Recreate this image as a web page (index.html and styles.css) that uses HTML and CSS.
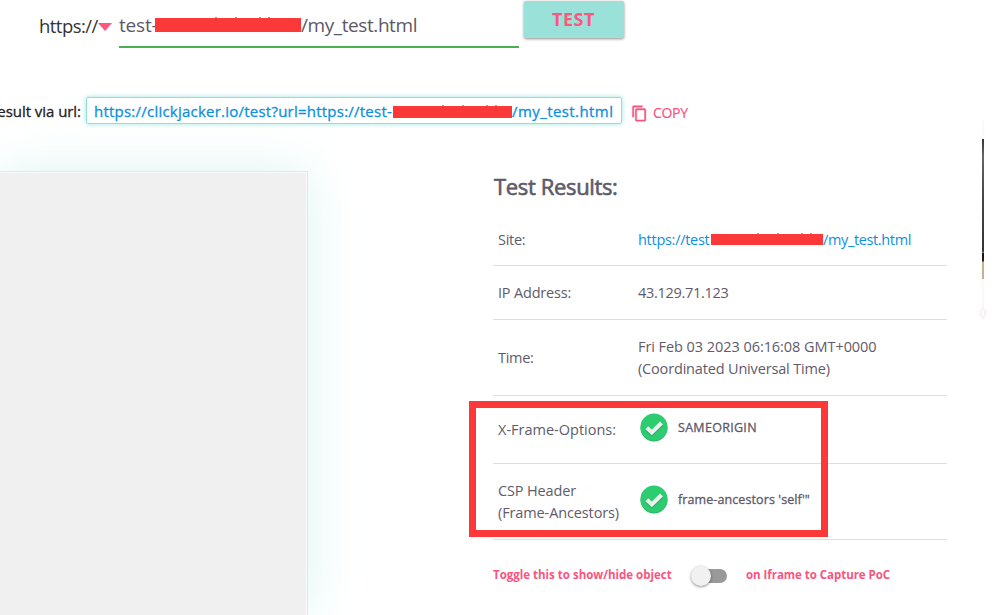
FILE: index.html
```html
<!DOCTYPE html>
<html lang="en">
<head>
<meta charset="utf-8">
<title>Clickjacker test</title>
<link rel="stylesheet" href="styles.css">
</head>
<body>
<div class="page">
  <header class="search">
    <span class="scheme">https://</span>
    <svg class="caret" viewBox="0 0 14 8"><path d="M0 0h14L7 8z"/></svg>
    <div class="field"><span class="t-pre">test-</span><i class="redact r1"></i><span class="t-post">/my_test.html</span></div>
    <button class="test">TEST</button>
  </header>
  <section class="share">
    <div class="share-label">esult via url:</div>
    <div class="share-url"><span class="s-pre">https://clickjacker.io/test?url=https://test-</span><i class="redact r2"></i><span class="s-post">/my_test.html</span></div>
    <svg class="copy-icon" viewBox="0 0 24 24"><path d="M16 1H4c-1.100 0-2 .9-2 2v14h2V3h12V1zm3 4H8c-1.100 0-2 .9-2 2v14c0 1.100.9 2 2 2h11c1.100 0 2-.9 2-2V7c0-1.100-.9-2-2-2zm0 16H8V7h11v14z"/></svg>
    <span class="copy">COPY</span>
  </section>
  <main class="content">
    <div class="preview"></div>
    <section class="results">
      <h1><span>Test Results:</span></h1>
      <div class="row site"><div class="key"><span class="k1">Site:</span></div><div class="val link"><span class="v-pre">https://test</span><i class="redact r3"></i><span class="v-post">/my_test.html</span></div></div>
      <div class="row ip"><div class="key"><span class="k2">IP Address:</span></div><div class="val"><span class="v2">43.129.71.123</span></div></div>
      <div class="row time"><div class="key"><span class="k3">Time:</span></div><div class="val two"><span class="v3">Fri Feb 03 2023 06:16:08 GMT+0000</span><span class="v4">(Coordinated Universal Time)</span></div></div>
      <div class="row xfo"><div class="key"><span class="k4">X-Frame-Options:</span></div><div class="val status"><svg class="check" viewBox="0 0 28 29"><circle cx="14" cy="15" r="13.500" fill="#26b563"/><circle cx="14" cy="14" r="13.500" fill="#2ecc71"/><path d="M6.800 16.200l5 4.800L21.800 11.500" stroke="#27ae60" stroke-width="4" fill="none"/><path d="M6.800 14.800l5 4.700L21.500 10" stroke="#ecf0f1" stroke-width="4" fill="none"/></svg><span class="v5">SAMEORIGIN</span></div></div>
      <div class="row csp"><div class="key two"><span class="k5">CSP Header</span><span class="k6">(Frame-Ancestors)</span></div><div class="val status"><svg class="check" viewBox="0 0 28 29"><circle cx="14" cy="15" r="13.500" fill="#26b563"/><circle cx="14" cy="14" r="13.500" fill="#2ecc71"/><path d="M6.800 16.200l5 4.800L21.800 11.500" stroke="#27ae60" stroke-width="4" fill="none"/><path d="M6.800 14.800l5 4.700L21.500 10" stroke="#ecf0f1" stroke-width="4" fill="none"/></svg><span class="v6">frame-ancestors 'self'"</span></div></div>
      <div class="toggle"><span class="g1">Toggle this to show/hide object</span><span class="switch"><i class="knob"></i></span><span class="g2">on Iframe to Capture PoC</span></div>
      <div class="marker"></div>
    </section>
    <aside class="edge"><i class="photo"></i><i class="foot"></i></aside>
  </main>
</div>
</body>
</html>
```
FILE: styles.css
```css
* { box-sizing: border-box; }
body { margin: 0; background: #fff; font-family: "Open Sans", "Noto Sans", sans-serif; color: #545060; }
.page { width: 1008px; height: 615px; overflow: hidden; display: flex; flex-direction: column; }
span { white-space: nowrap; }
.redact { display: block; flex: none; background: #fd3838; position: relative; }
.redact::before { content: ""; position: absolute; top: -1px; left: 41%; width: 2px; height: 1px; background: currentColor; opacity: .6; box-shadow: 20px 0 currentColor, 44px 0 currentColor, 53px 0 currentColor; }

.search { height: 49px; flex: none; display: flex; align-items: flex-start; padding-left: 39px; }
.scheme { width: 59px; font-size: 18.500px; line-height: 24px; padding-top: 14px; color: #333; letter-spacing: -.55px; }
.caret { width: 14px; height: 8px; margin-top: 23px; fill: #ff5680; flex: none; }
.field { width: 400px; height: 48px; margin-left: 7px; border-bottom: 2px solid #4caf50; display: flex; font-size: 19px; line-height: 24px; padding-top: 13px; color: #5c5868; }
.t-pre { width: 36px; letter-spacing: -.2px; }
.t-post { letter-spacing: -.42px; }
.r1 { width: 146px; height: 14px; margin-top: 5px; }
.test { width: 100px; height: 37px; margin: 1px 0 0 5px; border: 0; border-radius: 2px; background: #9ae2d9; color: #ff5680; font: 700 18px/36px "Open Sans", sans-serif; letter-spacing: .6px; padding: 0 1px 1px 0; box-shadow: 0 1px 3px rgba(0,0,0,.45); }

.share { height: 122px; flex: none; display: flex; padding-top: 48px; font-size: 15px; line-height: 20px; }
.share-label { width: 86px; padding: 4px 5px 0 0; display: flex; justify-content: flex-end; white-space: nowrap; color: #222; height: 30px; letter-spacing: -.05px; -webkit-text-stroke: .3px #222; }
.share-url { width: 536px; height: 27px; border: 1px solid #90e0d5; border-radius: 2px; box-shadow: 0 0 5px #9be7de; display: flex; padding: 3px 0 0 7px; color: #0b90e0; letter-spacing: .23px; -webkit-text-stroke: .3px #0b90e0; }
.s-pre { width: 299px; }
.s-post { letter-spacing: .42px; }
.r2 { width: 119px; height: 12px; margin-top: 5px; }
.copy-icon { width: 17px; height: 17px; margin: 8px 0 0 9px; fill: #f7557f; stroke: #f7557f; stroke-width: .6; }
.copy { margin: 6px 0 0 5px; font-size: 14px; color: #f7557f; letter-spacing: -.3px; -webkit-text-stroke: .2px #f7557f; }

.content { flex: 1; display: grid; grid-template-columns: 308px 454px 1fr; position: relative; }
.preview { border: 1px solid #d5efec; border-left: 0; border-bottom: 0; background: #f0f0f0; box-shadow: 0 0 50px #dcf5f2, inset -1px 1px #f7fafa; }
.results { margin-left: 185px; width: 454px; display: flex; flex-direction: column; font-size: 14.500px; line-height: 22px; color: #5f5b6a; }
.results h1 { margin: 0; padding-left: 1px; height: 41px; font-size: 22px; line-height: 31px; font-weight: 400; letter-spacing: -.35px; -webkit-text-stroke: .6px #5c5868; }
.row { border-bottom: 1px solid #dedede; display: grid; grid-template-columns: 140px 1fr; padding: 0 5px; align-items: center; letter-spacing: -.28px; }
.site { height: 54px; padding-top: 2px; } .ip { height: 54px; } .time { height: 76px; } .xfo { height: 68px; } .csp { height: 76px; }
.key, .val { display: flex; align-items: center; }
.two { flex-direction: column; align-items: flex-start; }
.link { color: #0b90e0; }
.v-pre { width: 73px; }
.v-post { letter-spacing: -.36px; }
.r3 { width: 112px; height: 11px; }
.status { font-size: 12.500px; gap: 10px; padding-left: 2px; -webkit-text-stroke: .3px #5c5868; }
.status span { color: #5c5868; }
.status svg { -webkit-text-stroke: 0; }
.xfo .val, .csp .val { padding-bottom: 4px; }
.k2 { letter-spacing: -.18px; } .k4 { letter-spacing: 0; } .k5 { letter-spacing: -.15px; } .k6 { letter-spacing: -.12px; }
.v2 { letter-spacing: -.3px; } .v3 { letter-spacing: -.06px; } .v4 { letter-spacing: -.17px; }
.v5 { letter-spacing: .3px; } .v6 { letter-spacing: .1px; }
.check { width: 28px; height: 29px; flex: none; }
.toggle { display: flex; height: 69px; align-items: center; font-size: 11.500px; font-weight: 700; color: #f7557f; }
.g1 { width: 199px; }
.g2 { letter-spacing: -.04px; }
.switch { width: 35px; height: 14px; border-radius: 7px; background: #999; position: relative; top: 1px; margin-right: 19px; }
.knob { position: absolute; left: -1px; top: -3px; width: 20px; height: 20px; border-radius: 50%; background: #f1f1f1; box-shadow: 0 1px 3px rgba(0,0,0,.45); }
.marker { position: absolute; left: 469px; top: 230px; width: 359px; height: 136px; border: 7px solid #fd3838; }
.edge { position: absolute; left: 982px; top: -51px; width: 2px; height: 200px; background: #fff7f6; }
.photo { display: block; height: 140px; margin-top: 19px; background: linear-gradient(#333 0, #666 12%, #484848 40%, #333 80%, #777 81%, #111 82%, #222 87%, #c9b08c 88%, #c9b08c); }
.foot { display: block; height: 6px; margin-top: 31px; background: #fff; box-shadow: 0 0 4px #bbb; }
```
